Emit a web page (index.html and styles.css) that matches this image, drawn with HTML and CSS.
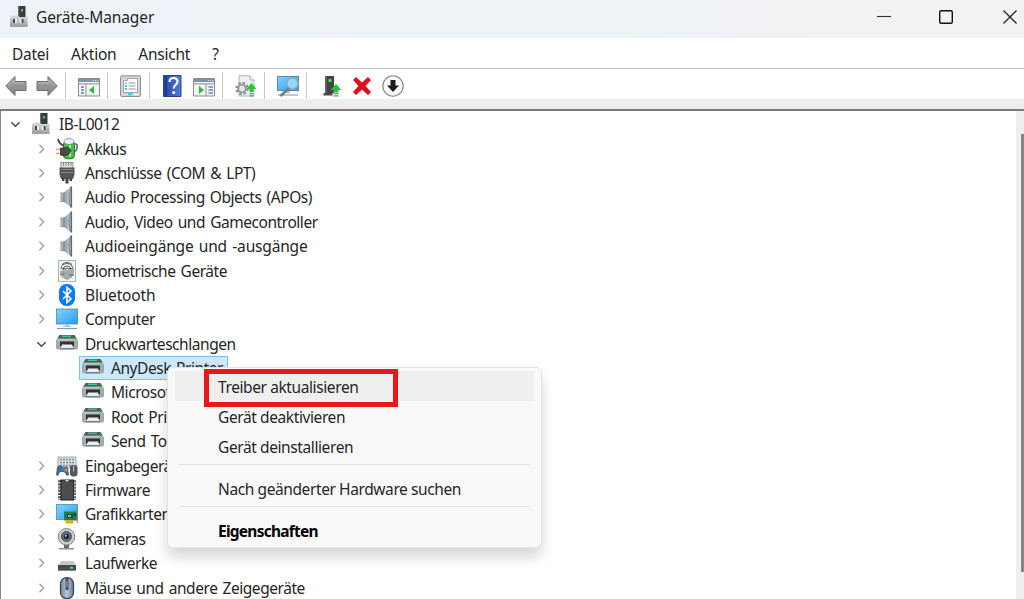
FILE: index.html
```html
<!DOCTYPE html>
<html lang="de">
<head>
    <meta charset="UTF-8">
    <meta name="viewport" content="width=device-width, initial-scale=1.0">
    <title>Geräte-Manager</title>
    <link rel="stylesheet" href="styles.css">
</head>
<body>
    <!-- Icon set, all on a 22x22 grid -->
    <svg class="defs" width="0" height="0">
        <defs>
            <linearGradient id="metal" x1="0" y1="0" x2="0" y2="1"><stop offset="0" stop-color="#dcdddd"/><stop offset="1" stop-color="#9b9c9e"/></linearGradient>
            <linearGradient id="arrow" x1="0" y1="0" x2="0" y2="1"><stop offset="0" stop-color="#aaa"/><stop offset="1" stop-color="#808080"/></linearGradient>
            <linearGradient id="cone" x1="0" y1="0" x2="1" y2="0"><stop offset="0" stop-color="#8a939b"/><stop offset=".6" stop-color="#bcc7d0"/><stop offset="1" stop-color="#87939e"/></linearGradient>
            <linearGradient id="screen" x1="0" y1="0" x2="1" y2="1"><stop offset="0" stop-color="#85d3fc"/><stop offset="1" stop-color="#259fee"/></linearGradient>
            <linearGradient id="help" x1="0" y1="0" x2="1" y2="0"><stop offset="0" stop-color="#2545a5"/><stop offset="1" stop-color="#5279dc"/></linearGradient>
            <linearGradient id="mouse" x1="0" y1="0" x2="1" y2="0"><stop offset="0" stop-color="#71869a"/><stop offset=".5" stop-color="#b5c7d8"/><stop offset="1" stop-color="#667a8d"/></linearGradient>

            <symbol id="i-closed" viewBox="0 0 22 22"><path d="M9.500 6.800l4 4.200-4 4.200" fill="none" stroke="#a0a0a0" stroke-width="1.400"/></symbol>
            <symbol id="i-open" viewBox="0 0 22 22"><path d="M7.300 9.300l4.200 4 4.200-4" fill="none" stroke="#484848" stroke-width="1.400"/></symbol>
            <symbol id="i-pc" viewBox="0 0 22 22">
                <rect x="10" y="0" width="7.500" height="13" fill="#3b3d3e"/><rect x="10" y="0" width="1.300" height="13" fill="#676969"/><rect x="13" y="3" width="2" height="2.500" fill="#38cf4b"/>
                <path d="M3 11l1-1.500h6l1 1.500h8.500v9.500H2V11z" fill="url(#metal)"/><path d="M2 20.500h17.500" stroke="#999" stroke-width=".8"/>
                <path d="M5 13h2v4H5zM13.500 13h2v4h-2z" fill="#44484b"/><path d="M7 13h2v4H7zM11.500 13h2v4h-2z" fill="#e9eaea"/>
            </symbol>
            <symbol id="i-battery" viewBox="0 0 22 22">
                <path d="M17 6h3q1.500 0 1 4-.5 4-4.500 4" fill="none" stroke="#626563" stroke-width="1.600"/>
                <rect x="7.500" y="3" width="11" height="17.800" rx="3.500" fill="#36c23a" stroke="#54665a"/><ellipse cx="13" cy="3.500" rx="5" ry="3" fill="#eceff9" stroke="#82848e" stroke-width=".8"/>
                <path d="M14 7v12" stroke="#9ceb88" stroke-width="2"/>
                <path d="M2 1q1 5 6 7" fill="none" stroke="#444" stroke-width="1.800"/>
                <path d="M0 11.500h6M0 15.500h6" stroke="#e7b11c" stroke-width="1.700"/><path d="M4.500 10h3.500q5-2 7 2.500l-2 3.500q-4 3-8.500 1z" fill="#4a4b49" stroke="#282929" stroke-width=".7"/>
            </symbol>
            <symbol id="i-port" viewBox="0 0 22 22">
                <rect x="5" y="0.500" width="12" height="6" fill="#e5e5e5" stroke="#777" stroke-width=".8"/><path d="M7.500 1v3M10 1v3M12.500 1v3M15 1v3" stroke="#777" stroke-width=".8"/>
                <path d="M3.500 5.500H18.500v7l-1.500 4.500H5l-1.500-4.500z" fill="#545656"/><path d="M5 7.500h12M5 10.500h12" stroke="#858787" stroke-width="1"/><path d="M6 16h2.500v3H6zM13.500 16h2.500v3h-2.500zM9.500 16h3v5.500h-3z" fill="#444"/>
            </symbol>
            <symbol id="i-speaker" viewBox="0 0 22 22"><path d="M4.500 6.500h4v9.500h-4z" fill="#8b939b"/><path d="M8 6.500L15 .5q1.800 10.500 0 21L8 16z" fill="url(#cone)"/><path d="M15 .5q-4 10.500 0 21" fill="none" stroke="#74808b" stroke-width=".9"/><path d="M15.500.5v21" stroke="#5d666f" stroke-width="1.200"/><path d="M6 7.500v7.500" stroke="#c9ced2"/></symbol>
            <symbol id="i-finger" viewBox="0 0 22 22">
                <rect x="2.500" y=".5" width="17" height="21" fill="#eef5f1" stroke="#9ebbad"/>
                <g fill="none" stroke="#565b58" stroke-width=".95"><path d="M6 4.500q5-4 10 0M5 9q0-5 6-5.500Q17 4 17 10v6M5 16v-5M7 18v-8q0-4 4-4t4 4v8M9 19v-8.500q0-2.500 2-2.500t2 2.500V19M11 10v10M6 8.500h3M13 8.500h3M5.500 14h3M13 15h4"/></g>
            </symbol>
            <symbol id="i-bt" viewBox="0 0 22 22"><rect x="3" y="0" width="16" height="22" rx="7.500" fill="#087cf5"/><path d="M7 7l8 8-4 3.500v-15L15 7l-8 8" fill="none" stroke="#fff" stroke-width="1.600"/></symbol>
            <symbol id="i-monitor" viewBox="0 0 22 22"><rect x=".5" y="1" width="21" height="15" fill="url(#screen)" stroke="#4788ae" stroke-width=".8"/><path d="M9 16.500h4v1.500h2v1H7v-1h2z" fill="#b6c0ca"/><path d="M1 20.500h20" stroke="#8798aa" stroke-width="1.200"/></symbol>
            <symbol id="i-printer" viewBox="0 0 22 22">
                <path d="M3.500 2h15L21 6H1z" fill="#565c5e"/><path d="M6 3.300h9" stroke="#32c992" stroke-width="1.500"/><path d="M0 7l1.500-1.500h19L22 7v8l-1 1.500H1L0 15z" fill="#a3a9af"/><path d="M1 6.800h20" stroke="#c9ced2" stroke-width="1.200"/><path d="M4 8.500h14v5H4z" fill="#303335"/><path d="M6 11.500h10l1.500 4H4.500z" fill="#e9edf1"/><path d="M4 15.800h14" stroke="#565b5f" stroke-width="1"/><path d="M17 6.200h3" stroke="#31e246" stroke-width="1.600"/>
            </symbol>
            <symbol id="i-input" viewBox="0 0 22 22"><path d="M2 2h18v11H2z" fill="#d9dee1" stroke="#8f979d" stroke-width=".8"/><path d="M4 4.500h14M4 7.500h14M4 10.500h14" stroke="#848e95" stroke-width="1.500" stroke-dasharray="2 1"/><path d="M1 12q2-3 5-1l2 1q3-2 4 1l1 7-2 1-3-4H4l-2 4-2-1z" fill="#536679"/><path d="M5 12h4v4H5z" fill="#1687e8"/><path d="M8.500 13.500h3v3h-3z" fill="#f37838"/><rect x="14" y="10" width="7.500" height="11.500" rx="3" fill="#515962"/><path d="M17.700 10.500v6" stroke="#cbd5df"/></symbol>
            <symbol id="i-chip" viewBox="0 0 22 22"><rect x="5" y="1" width="12.500" height="20" fill="#4c4d4e" stroke="#202122"/><path d="M3.500 1v20M18.500 1v20" stroke="#303334" stroke-width="3" stroke-dasharray="2.200 1"/><path d="M3 1v20M19 1v20" stroke="#d2d4d4" stroke-width="1" stroke-dasharray="1.500 1.700"/><path d="M9 1q2 3 4 0z" fill="#ddd"/></symbol>
            <symbol id="i-gpu" viewBox="0 0 22 22"><rect x=".5" y="1.500" width="21" height="15" fill="url(#screen)" stroke="#4b8db5" stroke-width=".8"/><rect x="8" y="8.500" width="13" height="9" fill="#267c46"/><path d="M11 11h6v4h-6zM18 10h2v3h-2z" fill="#194b33"/><path d="M12 12h3v2h-3z" fill="#7cc19a"/><path d="M9.500 17.500h8V20.500h-8z" fill="#f5a400"/><path d="M21.300 4v16" stroke="#89959d" stroke-width="1.200"/></symbol>
            <symbol id="i-camera" viewBox="0 0 22 22"><path d="M8 16h5v4H8z" fill="#666"/><path d="M3 20.800h15" stroke="#8d8f91" stroke-width="1.500"/><circle cx="10.500" cy="8.800" r="8.300" fill="#c9cccf" stroke="#858789"/><circle cx="10.500" cy="8.500" r="5" fill="#68717a" stroke="#494d52"/><circle cx="10.500" cy="8.500" r="2.800" fill="#172b47"/><circle cx="9.800" cy="7.700" r="1.100" fill="#90b7e4"/></symbol>
            <symbol id="i-drive" viewBox="0 0 22 22"><path d="M5 9h12.500l2.500 5H2z" fill="#c5c8ca"/><path d="M2 13h18v6H2z" fill="#494c4e"/><path d="M2 18.500h18" stroke="#858789"/><path d="M14 15.800h3" stroke="#3cec4a" stroke-width="1.800"/></symbol>
            <symbol id="i-mouse" viewBox="0 0 22 22"><rect x="4.500" y=".7" width="13" height="20.800" rx="6" fill="url(#mouse)" stroke="#404951" stroke-width="1.300"/><path d="M9.500 1h3v12h-3z" fill="#424c58"/><path d="M11 4v6" stroke="#9eadbb"/></symbol>

            <symbol id="t-back" viewBox="0 0 22 22"><path d="M.7 11L10 1.500v5h11v9H10v5z" fill="url(#arrow)" stroke="#707070"/><path d="M3 11L9 5v3h10" fill="none" stroke="#bababa"/></symbol>
            <symbol id="t-next" viewBox="0 0 22 22"><path d="M21.300 11L12 1.500v5H1v9h11v5z" fill="url(#arrow)" stroke="#707070"/><path d="M3 8h10V5l6 6" fill="none" stroke="#bababa"/></symbol>
            <symbol id="t-tree" viewBox="0 0 22 22"><path d="M.5 3.500h21v17.500H.5z" fill="#f2f4f5" stroke="#858d95"/><path d="M1 4h20v3H1z" fill="#8193a8"/><path d="M15 5.500h5" stroke="#dce6ee" stroke-width="1.200" stroke-dasharray="1 1"/><path d="M1 8.800h20" stroke="#a6afb8" stroke-width="1.500"/><path d="M8 9v12" stroke="#88929b"/><path d="M3 12h3M3 15h3M3 18h3" stroke="#3c8cbb" stroke-width="1.300"/><path d="M16 11v8l-5-4z" fill="#29c12c"/></symbol>
            <symbol id="t-prop" viewBox="0 0 22 22"><rect x=".5" y=".8" width="20" height="20.700" rx="1.500" fill="#d1d5d8" stroke="#8c9297"/><path d="M3.500 5.500h4v-2h10v14h-14z" fill="#fcfcfc" stroke="#9ca6ad"/><path d="M8.500 8h7M8.500 11h7M8.500 14h7" stroke="#889baa"/><path d="M5 8h2" stroke="#888"/><path d="M5 11h2M5 14h2" stroke="#19a6dc" stroke-width="1.400"/><path d="M8 19.300h4" stroke="#25c2ea" stroke-width="1.700"/><path d="M14 19.300h4" stroke="#fff" stroke-width="1.300"/></symbol>
            <symbol id="t-help" viewBox="0 0 22 22"><path d="M1.500.5h17.500v21H1.500z" fill="url(#help)" stroke="#2a438c"/><path d="M4 1v20" stroke="#173887" stroke-width="1.500"/><path d="M7.500 7q0-4 4-4t4 3.800c0 3-3.800 3-3.800 6.700" fill="none" stroke="#fff" stroke-width="2.200"/><circle cx="11.700" cy="17.500" r="1.500" fill="#fff"/></symbol>
            <symbol id="t-action" viewBox="0 0 22 22"><path d="M.5 3.500h21v17.500H.5z" fill="#f2f4f5" stroke="#858d95"/><path d="M1 4h20v3H1z" fill="#8193a8"/><path d="M15 5.500h5" stroke="#dce6ee" stroke-width="1.200" stroke-dasharray="1 1"/><path d="M1 8.800h20" stroke="#a6afb8" stroke-width="1.500"/><path d="M13 9v12" stroke="#88929b"/><path d="M15.500 12H20M15.500 15H20M15.500 18H20" stroke="#548ac0" stroke-width="1.300"/><path d="M6 11v8l5-4z" fill="#29c12c"/></symbol>
            <symbol id="t-update" viewBox="0 0 22 22"><path d="M4 .8h11l4 4V21H4z" fill="#f0f1f2" stroke="#b4b7ba"/><path d="M15 1v4h4" fill="#fff" stroke="#aaa"/><circle cx="7" cy="13.500" r="5.500" fill="none" stroke="#8d9297" stroke-width="2.500" stroke-dasharray="2.500 1.800"/><circle cx="7" cy="13.500" r="3.700" fill="#e8e9ea" stroke="#8d9297" stroke-width="1.600"/><path d="M16.500 8l5 6h-3v3h-4v-3h-3zM14.500 18h4v1.300h-4zM14.500 20.300h4v1.200h-4z" fill="#20c82c"/></symbol>
            <symbol id="t-scan" viewBox="0 0 22 22"><rect x=".5" y="1.500" width="21" height="14" fill="url(#screen)" stroke="#538caf"/><path d="M9 16h4v2H9z" fill="#b6bec4"/><path d="M1 20h20" stroke="#8fa3b5" stroke-width="1.200"/><path d="M12 13l-8.500 8" stroke="#727c84" stroke-width="2.600"/><circle cx="15.500" cy="8.500" r="5.600" fill="#9dd9f8" fill-opacity=".9" stroke="#8ca4b3" stroke-width="1.200"/></symbol>
            <symbol id="t-device" viewBox="0 0 22 22"><path d="M5 1h9v17H5z" fill="#414344"/><path d="M5 1h2v17H5z" fill="#5d6061"/><rect x="8.500" y="4" width="3" height="3" fill="#3ae448"/><path d="M3.500 18h9v2.500h-9z" fill="#494949"/><path d="M16 9l5.500 6h-3v2.500h-5V15h-3zM13.500 18h5v1.300h-5zM13.500 20.300h5v1.200h-5z" fill="#20c82c"/></symbol>
            <symbol id="t-remove" viewBox="0 0 22 22"><path d="M2 5l3-3 6 5.500 6-5.500L20 5l-5.500 6 5.500 6-3 3-6-5.500L5 20l-3-3L7.500 11z" fill="#e40b1b"/></symbol>
            <symbol id="t-disable" viewBox="0 0 22 22"><circle cx="11" cy="11" r="10.200" fill="#fafafa" stroke="#868686" stroke-width="1.100"/><path d="M8.500 5h5v5.500H17L11 17l-6-6.500h3.500z" fill="#1c1c1c"/></symbol>
        </defs>
    </svg>

    <div class="window">
        <header class="titlebar">
            <svg class="icon"><use href="#i-pc"/></svg>
            <h1 class="title">Geräte-Manager</h1>
            <svg class="controls" width="142" height="20" viewBox="0 0 142 20">
                <path d="M1 9.500h14" stroke="#333" stroke-width="1.100"/>
                <rect x="63.700" y="3.700" width="12.600" height="12.600" rx="1.500" fill="none" stroke="#111" stroke-width="1.400"/>
                <path d="M127.500 3.500l13 13M140.500 3.500l-13 13" stroke="#222" stroke-width="1.300"/>
            </svg>
        </header>

        <nav class="menubar">
            <span>Datei</span>
            <span>Aktion</span>
            <span>Ansicht</span>
            <span>?</span>
        </nav>

        <div class="toolbar">
            <div class="group"><svg class="icon"><use href="#t-back"/></svg><svg class="icon"><use href="#t-next"/></svg></div>
            <div class="group"><svg class="icon"><use href="#t-tree"/></svg></div>
            <div class="group"><svg class="icon"><use href="#t-prop"/></svg></div>
            <div class="group"><svg class="icon"><use href="#t-help"/></svg><svg class="icon"><use href="#t-action"/></svg></div>
            <div class="group"><svg class="icon"><use href="#t-update"/></svg></div>
            <div class="group"><svg class="icon"><use href="#t-scan"/></svg></div>
            <div class="group"><svg class="icon"><use href="#t-device"/></svg><svg class="icon"><use href="#t-remove"/></svg><svg class="icon"><use href="#t-disable"/></svg></div>
        </div>

        <main class="content">
            <ul class="tree">
                <li class="row root"><svg class="chevron"><use href="#i-open"/></svg><svg class="icon"><use href="#i-pc"/></svg><span class="label">IB-L0012</span></li>
                <li class="row"><svg class="chevron"><use href="#i-closed"/></svg><svg class="icon"><use href="#i-battery"/></svg><span class="label">Akkus</span></li>
                <li class="row"><svg class="chevron"><use href="#i-closed"/></svg><svg class="icon"><use href="#i-port"/></svg><span class="label">Anschlüsse (COM &amp; LPT)</span></li>
                <li class="row"><svg class="chevron"><use href="#i-closed"/></svg><svg class="icon"><use href="#i-speaker"/></svg><span class="label">Audio Processing Objects (APOs)</span></li>
                <li class="row"><svg class="chevron"><use href="#i-closed"/></svg><svg class="icon"><use href="#i-speaker"/></svg><span class="label">Audio, Video und Gamecontroller</span></li>
                <li class="row wide"><svg class="chevron"><use href="#i-closed"/></svg><svg class="icon"><use href="#i-speaker"/></svg><span class="label">Audioeingänge und -ausgänge</span></li>
                <li class="row"><svg class="chevron"><use href="#i-closed"/></svg><svg class="icon"><use href="#i-finger"/></svg><span class="label">Biometrische Geräte</span></li>
                <li class="row wide"><svg class="chevron"><use href="#i-closed"/></svg><svg class="icon"><use href="#i-bt"/></svg><span class="label">Bluetooth</span></li>
                <li class="row"><svg class="chevron"><use href="#i-closed"/></svg><svg class="icon"><use href="#i-monitor"/></svg><span class="label">Computer</span></li>
                <li class="row"><svg class="chevron"><use href="#i-open"/></svg><svg class="icon"><use href="#i-printer"/></svg><span class="label">Druckwarteschlangen</span></li>
                <li class="row leaf"><span class="selected"><svg class="icon"><use href="#i-printer"/></svg><span class="label">AnyDesk Printer</span></span></li>
                <li class="row leaf"><svg class="icon"><use href="#i-printer"/></svg><span class="label">Microsoft</span></li>
                <li class="row leaf"><svg class="icon"><use href="#i-printer"/></svg><span class="label">Root Print</span></li>
                <li class="row leaf"><svg class="icon"><use href="#i-printer"/></svg><span class="label">Send To</span></li>
                <li class="row"><svg class="chevron"><use href="#i-closed"/></svg><svg class="icon"><use href="#i-input"/></svg><span class="label">Eingabegeräte</span></li>
                <li class="row"><svg class="chevron"><use href="#i-closed"/></svg><svg class="icon"><use href="#i-chip"/></svg><span class="label">Firmware</span></li>
                <li class="row"><svg class="chevron"><use href="#i-closed"/></svg><svg class="icon"><use href="#i-gpu"/></svg><span class="label">Grafikkarten</span></li>
                <li class="row"><svg class="chevron"><use href="#i-closed"/></svg><svg class="icon"><use href="#i-camera"/></svg><span class="label">Kameras</span></li>
                <li class="row"><svg class="chevron"><use href="#i-closed"/></svg><svg class="icon"><use href="#i-drive"/></svg><span class="label">Laufwerke</span></li>
                <li class="row"><svg class="chevron"><use href="#i-closed"/></svg><svg class="icon"><use href="#i-mouse"/></svg><span class="label">Mäuse und andere Zeigegeräte</span></li>
            </ul>
            <div class="scrollbar"><div class="thumb"></div></div>
        </main>
    </div>

    <div class="context-menu">
        <div class="item active">Treiber aktualisieren</div>
        <div class="item">Gerät deaktivieren</div>
        <div class="item">Gerät deinstallieren</div>
        <div class="line"></div>
        <div class="item">Nach geänderter Hardware suchen</div>
        <div class="line"></div>
        <div class="item default">Eigenschaften</div>
    </div>
    <div class="marker"></div>
</body>
</html>
```

FILE: styles.css
```css
* {
    box-sizing: border-box;
}
body {
    margin: 0;
    height: 100vh;
    overflow: hidden;
    background-color: #fff;
    color: #262626;
    font-family: "Noto Sans", "Open Sans", sans-serif;
    font-size: 15.5px;
    letter-spacing: -0.4px;
    white-space: nowrap;
}
.defs {
    position: absolute;
}
.window {
    display: flex;
    flex-direction: column;
    height: 100vh;
}
.icon {
    flex: none;
    width: 22px;
    height: 22px;
}
.titlebar {
    display: flex;
    align-items: center;
    flex: none;
    height: 38px;
    padding: 0 6px 4px 8px;
    background: linear-gradient(90deg, #edf3f8 0%, #eff3f7 60%, #f2f2f3 85%);
}
.title {
    margin: 0 auto 0 6px;
    font-size: 15.5px;
    font-weight: normal;
    letter-spacing: -0.12px;
}
.controls {
    flex: none;
}
.menubar {
    display: flex;
    align-items: center;
    flex: none;
    gap: 22px;
    height: 30px;
    padding: 2px 12px 0;
    letter-spacing: -0.25px;
}
.toolbar {
    display: flex;
    flex: none;
    height: 43px;
    padding-top: 3px;
    border-top: 1px solid #bdbdbd;
    border-bottom: 2px solid #7c7c7c;
    background: linear-gradient(#fff 30px, #eee 30px);
}
.group {
    display: flex;
    align-items: center;
    gap: 9px;
    height: 27px;
    padding: 0 7px 0 12px;
    border-right: 1px solid #c6c6c6;
}
.group:first-child {
    padding-left: 5px;
}
.group:last-child {
    padding-left: 13px;
    border-right: none;
}
.content {
    display: flex;
    flex: 1;
    min-height: 0;
    border-left: 1px solid #858585;
}
.tree {
    flex: 1;
    margin: 0;
    padding: 1px 0 0;
    list-style: none;
    letter-spacing: -0.45px;
    word-spacing: 1.5px;
    overflow: hidden;
}
.row {
    display: flex;
    align-items: center;
    height: 24.4px;
    padding-left: 29px;
}
.row.root {
    padding-left: 3px;
}
.row.leaf {
    padding-left: 81px;
}
.row.wide {
    letter-spacing: -0.18px;
}
.chevron {
    flex: none;
    width: 22px;
    height: 22px;
    margin-right: 4px;
}
.label {
    margin-left: 7px;
}
.selected {
    display: flex;
    align-items: center;
    height: 24px;
    margin-left: -3px;
    padding: 0 4px 0 2px;
    border: 1px solid #84bfec;
    background-color: #cce8ff;
}
.scrollbar {
    display: flex;
    justify-content: flex-end;
    width: 8px;
    padding-top: 23px;
    background-color: #efefef;
}
.thumb {
    width: 3px;
    height: 438px;
    background-color: #858585;
}
.context-menu {
    position: absolute;
    left: 167px;
    top: 367px;
    width: 375px;
    height: 181px;
    padding: 3px 7px;
    border: 1px solid #e3e3e3;
    border-radius: 6px;
    background-color: #f9f9f9;
    box-shadow: 0 9px 14px rgba(0, 0, 0, 0.16);
}
.item {
    height: 30px;
    padding: 1px 0 0 43px;
    border-radius: 3px;
    line-height: 30px;
}
.item.active {
    background-color: #efefef;
}
.item.default {
    color: #000;
    font-weight: bold;
    letter-spacing: -0.75px;
}
.line {
    height: 1px;
    margin: 3px 4px 8px;
    background-color: #e2e2e2;
}
.marker {
    position: absolute;
    left: 204px;
    top: 369px;
    width: 194px;
    height: 38px;
    border: 5px solid #e8191c;
}
```
